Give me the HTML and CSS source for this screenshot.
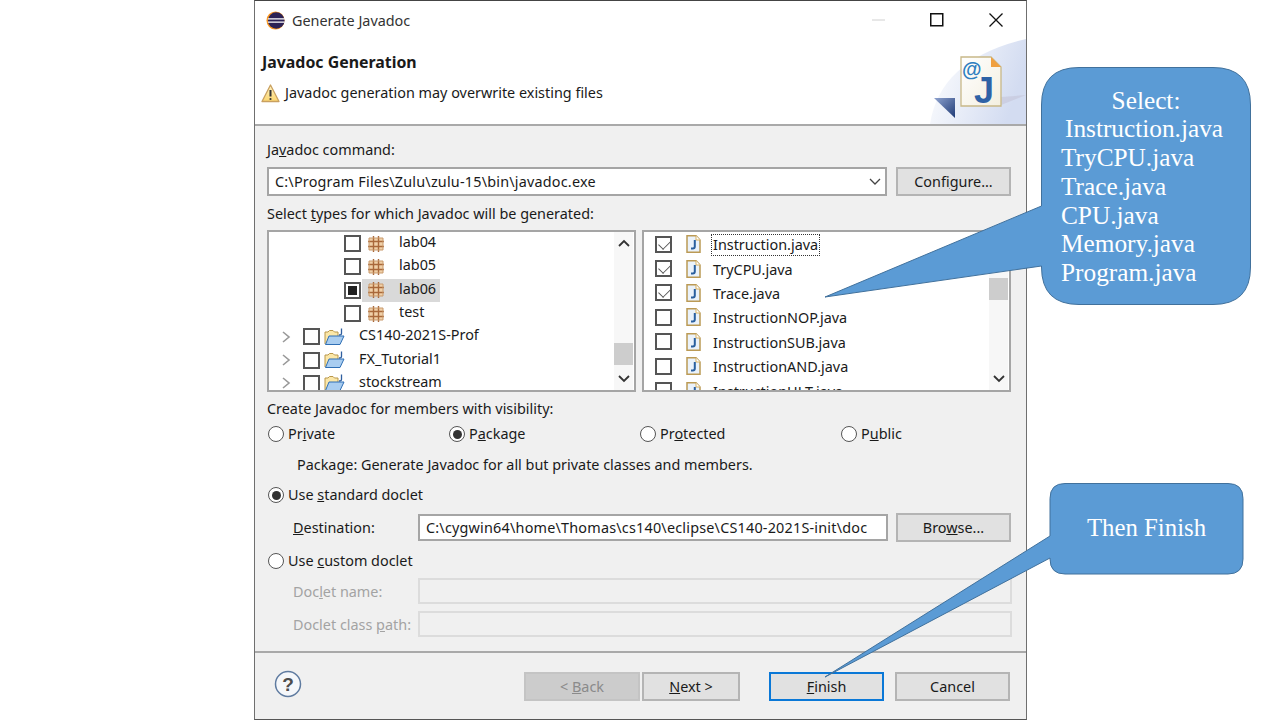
FILE: index.html
```html
<!DOCTYPE html>
<html lang="en">
<head>
  <meta charset="UTF-8">
  <title>Generate Javadoc</title>
  <link rel="stylesheet" href="styles.css">
</head>
<body>

  <svg class="defs" width="0" height="0">
    <symbol id="pkg" viewBox="0 0 16 16">
      <rect x="1" y="2" width="14" height="12" fill="#f0d0a8"/>
      <path d="M0 5.500H16M0 10.500H16M5.500 0V16M10.500 0V16" stroke="#a9683a" stroke-width="1.400" fill="none"/>
      <path d="M1 2H15V14H1Z" stroke="#c99a6c" fill="none"/>
    </symbol>
    <symbol id="project" viewBox="0 0 21 18">
      <path d="M1 16V4H4L5.500 2.500H9L10.500 4H14V8" fill="#fbe7a8" stroke="#b9974a"/>
      <path d="M1.500 16.500L5 8H20L16 16.500Z" fill="#a9cdf0" stroke="#2f6fb5"/>
      <path d="M17.500 0.500V5.500Q17.500 7 15 7" stroke="#2f5f9f" stroke-width="1.300" fill="none"/>
    </symbol>
    <symbol id="java" viewBox="0 0 15 18">
      <path d="M1 0.800H10L14 5V17.200H1Z" fill="#eaf2fb" stroke="#bb9a55" stroke-width="1.500"/>
      <path d="M10 0.800V5H14" fill="#fff" stroke="#d8b060"/>
      <path d="M8.800 5V11.500Q8.800 13.500 6.800 13.500H5" stroke="#2a5f9e" stroke-width="2" fill="none"/>
    </symbol>
  </svg>

  <div class="dialog">
    <div class="titlebar">
      <svg class="app-icon" width="19" height="19" viewBox="0 0 20 20">
        <circle cx="10" cy="10" r="9.500" fill="#f7941e"/>
        <circle cx="10.800" cy="10" r="8.700" fill="#2c2255"/>
        <path d="M2 8.200H19.500M2 11.800H19.500" stroke="#fff" stroke-width="1.300"/>
      </svg>
      <span class="title-text">Generate Javadoc</span>
      <div class="win-btns">
        <svg width="14" height="14" viewBox="0 0 14 14"><path d="M1 7H14" stroke="#d0d0d0"/></svg>
        <svg width="14" height="14" viewBox="0 0 14 14"><rect x="0.750" y="0.750" width="12" height="12" fill="none" stroke="#111" stroke-width="1.500"/></svg>
        <svg width="14" height="14" viewBox="0 0 14 14"><path d="M0.500 0.500L13.500 13.500M13.500 0.500L0.500 13.500" stroke="#111" stroke-width="1.300"/></svg>
      </div>
    </div>

    <div class="banner">
      <h1 class="banner-title">Javadoc Generation</h1>
      <div class="banner-msg">
        <svg width="19" height="19" viewBox="0 0 19 19">
          <defs>
            <linearGradient id="warnfill" x1="0" y1="0" x2="0" y2="1">
              <stop offset="0" stop-color="#fff3c4"/>
              <stop offset="1" stop-color="#fbd670"/>
            </linearGradient>
          </defs>
          <path d="M9.500 1L18 17.500H1Z" fill="url(#warnfill)" stroke="#c9a060" stroke-width="1.300" stroke-linejoin="round"/>
          <path d="M9.500 6V12.500" stroke="#333" stroke-width="2"/>
          <circle cx="9.500" cy="15" r="1.100" fill="#333"/>
        </svg>
        <span>Javadoc generation may overwrite existing files</span>
      </div>
      <svg class="banner-art" width="96" height="85" viewBox="0 0 96 85">
        <defs>
          <linearGradient id="artfade" x1="0" y1="0" x2="1" y2="0.300">
            <stop offset="0" stop-color="#ffffff"/>
            <stop offset="1" stop-color="#d3dcf1"/>
          </linearGradient>
          <linearGradient id="arrowfade" x1="0" y1="0" x2="1" y2="1">
            <stop offset="0" stop-color="#8fa3cf"/>
            <stop offset="1" stop-color="#1f3a75"/>
          </linearGradient>
          <linearGradient id="pagefade" x1="0" y1="0" x2="1" y2="1">
            <stop offset="0" stop-color="#ffffff"/>
            <stop offset="1" stop-color="#f3efe0"/>
          </linearGradient>
        </defs>
        <path d="M0 85Q10 20 96 0V85Z" fill="url(#artfade)"/>
        <path d="M71 58L96 56L71 66Z" fill="#c4c4d8" opacity="0.600"/>
        <path d="M4 59H25V79Z" fill="url(#arrowfade)"/>
        <path d="M31 18H61L71 28V67H31Z" fill="url(#pagefade)" stroke="#c8b888" stroke-width="1.300"/>
        <path d="M61 18L71 28H61Z" fill="#f0a040"/>
        <text x="32" y="37" class="art-at">@</text>
        <text x="44" y="64" class="art-j">J</text>
      </svg>
    </div>

    <div class="content">
      <div class="label row-command"><span>Ja<u>v</u>adoc command:</span></div>
      <div class="field-row row-combo">
        <div class="combo">
          <span class="path-text">C:\Program Files\Zulu\zulu-15\bin\javadoc.exe</span>
          <svg width="12" height="7" viewBox="0 0 12 7"><path d="M1 1L6 6L11 1" stroke="#444" stroke-width="1.300" fill="none"/></svg>
        </div>
        <button class="btn side-btn" type="button">Confi<u>g</u>ure...</button>
      </div>

      <div class="label row-select"><span>Select <u>t</u>ypes for which Javadoc will be generated:</span></div>
      <div class="panels">
        <div class="panel">
          <div class="tree">
            <div class="tree-row pkg-row"><i class="check"></i><svg class="pkg-icon"><use href="#pkg"/></svg><span class="pkg-name">lab04</span></div>
            <div class="tree-row pkg-row"><i class="check"></i><svg class="pkg-icon"><use href="#pkg"/></svg><span class="pkg-name">lab05</span></div>
            <div class="tree-row pkg-row"><i class="check partial"></i><div class="selected"><svg class="pkg-icon"><use href="#pkg"/></svg><span class="pkg-name">lab06</span></div></div>
            <div class="tree-row pkg-row"><i class="check"></i><svg class="pkg-icon"><use href="#pkg"/></svg><span class="pkg-name">test</span></div>
            <div class="tree-row prj-row"><svg class="twist" width="9" height="12" viewBox="0 0 9 12"><path d="M1 1L7 6L1 11" stroke="#999" stroke-width="1.600" fill="none"/></svg><i class="check"></i><svg class="prj-icon"><use href="#project"/></svg><span class="prj-name">CS140-2021S-Prof</span></div>
            <div class="tree-row prj-row"><svg class="twist" width="9" height="12" viewBox="0 0 9 12"><path d="M1 1L7 6L1 11" stroke="#999" stroke-width="1.600" fill="none"/></svg><i class="check"></i><svg class="prj-icon"><use href="#project"/></svg><span class="prj-name">FX_Tutorial1</span></div>
            <div class="tree-row prj-row"><svg class="twist" width="9" height="12" viewBox="0 0 9 12"><path d="M1 1L7 6L1 11" stroke="#999" stroke-width="1.600" fill="none"/></svg><i class="check"></i><svg class="prj-icon"><use href="#project"/></svg><span class="prj-name">stockstream</span></div>
          </div>
          <div class="scrollbar">
            <svg width="12" height="8" viewBox="0 0 12 8"><path d="M1 7L6 2L11 7" stroke="#333" stroke-width="1.800" fill="none"/></svg>
            <div class="track thumb-low"><div class="thumb"></div></div>
            <svg width="12" height="8" viewBox="0 0 12 8"><path d="M1 1L6 6L11 1" stroke="#333" stroke-width="1.800" fill="none"/></svg>
          </div>
        </div>
        <div class="panel">
          <div class="files">
            <div class="file-row"><i class="check checked"></i><svg class="java-icon"><use href="#java"/></svg><span class="file-name focused">Instruction.java</span></div>
            <div class="file-row"><i class="check checked"></i><svg class="java-icon"><use href="#java"/></svg><span class="file-name">TryCPU.java</span></div>
            <div class="file-row"><i class="check checked"></i><svg class="java-icon"><use href="#java"/></svg><span class="file-name">Trace.java</span></div>
            <div class="file-row"><i class="check"></i><svg class="java-icon"><use href="#java"/></svg><span class="file-name">InstructionNOP.java</span></div>
            <div class="file-row"><i class="check"></i><svg class="java-icon"><use href="#java"/></svg><span class="file-name">InstructionSUB.java</span></div>
            <div class="file-row"><i class="check"></i><svg class="java-icon"><use href="#java"/></svg><span class="file-name">InstructionAND.java</span></div>
            <div class="file-row"><i class="check"></i><svg class="java-icon"><use href="#java"/></svg><span class="file-name">InstructionHLT.java</span></div>
          </div>
          <div class="scrollbar">
            <svg width="12" height="8" viewBox="0 0 12 8"><path d="M1 7L6 2L11 7" stroke="#333" stroke-width="1.800" fill="none"/></svg>
            <div class="track thumb-high"><div class="thumb"></div></div>
            <svg width="12" height="8" viewBox="0 0 12 8"><path d="M1 1L6 6L11 1" stroke="#333" stroke-width="1.800" fill="none"/></svg>
          </div>
        </div>
      </div>

      <div class="label row-create"><span>Create Javadoc for members with visibility:</span></div>
      <div class="radios">
        <label class="radio-item"><i class="radio"></i><span>Pr<u>i</u>vate</span></label>
        <label class="radio-item"><i class="radio on"></i><span>P<u>a</u>ckage</span></label>
        <label class="radio-item"><i class="radio"></i><span>Pr<u>o</u>tected</span></label>
        <label class="radio-item"><i class="radio"></i><span>P<u>u</u>blic</span></label>
      </div>
      <div class="label row-desc"><span>Package: Generate Javadoc for all but private classes and members.</span></div>
      <label class="radio-item row-standard"><i class="radio on"></i><span>Use <u>s</u>tandard doclet</span></label>
      <div class="field-row row-dest">
        <span class="field-label"><u>D</u>estination:</span>
        <div class="input path-text">C:\cygwin64\home\Thomas\cs140\eclipse\CS140-2021S-init\doc</div>
        <button class="btn side-btn" type="button">Bro<u>w</u>se...</button>
      </div>
      <label class="radio-item row-custom"><i class="radio"></i><span>Use <u>c</u>ustom doclet</span></label>
      <div class="field-row row-name disabled">
        <span class="field-label">Doc<u>l</u>et name:</span>
        <div class="input"></div>
      </div>
      <div class="field-row row-path disabled">
        <span class="field-label">Doclet class <u>p</u>ath:</span>
        <div class="input"></div>
      </div>
    </div>

    <div class="footer">
      <svg class="help" width="28" height="28" viewBox="0 0 28 28">
        <circle cx="14" cy="14" r="12.500" fill="#f5f7fa" stroke="#5f7ba0" stroke-width="1.500"/>
        <text x="14" y="20.500" class="help-mark">?</text>
      </svg>
      <div class="footer-btns">
        <button class="btn back" type="button">&lt; <u>B</u>ack</button>
        <button class="btn next" type="button"><u>N</u>ext &gt;</button>
        <button class="btn finish" type="button"><u>F</u>inish</button>
        <button class="btn cancel" type="button">Cancel</button>
      </div>
    </div>
  </div>

  <!-- slide callouts sit on top of the screenshot -->
  <svg class="callouts" width="1280" height="720" viewBox="0 0 1280 720">
    <path class="bubble" d="M1079 67.500H1213Q1250.500 67.500 1250.500 105V267Q1250.500 304.500 1213 304.500H1079Q1041.500 304.500 1041.500 267V266L825 297L1041.500 206V105Q1041.500 67.500 1079 67.500Z"/>
    <path class="bubble" d="M1065 483.500H1228Q1243 483.500 1243 498.500V559Q1243 574 1228 574H1065Q1050 574 1050 559V558L825 677L1050 536V498.500Q1050 483.500 1065 483.500Z"/>
  </svg>
  <div class="note note-select">
    <div class="note-head">Select:</div>
    <div class="note-first">Instruction.java</div>
    <div>TryCPU.java</div>
    <div>Trace.java</div>
    <div>CPU.java</div>
    <div>Memory.java</div>
    <div>Program.java</div>
  </div>
  <div class="note note-finish">Then Finish</div>

</body>
</html>
```

FILE: styles.css
```css
* {
  box-sizing: border-box;
}
html, body {
  margin: 0;
  height: 720px;
  overflow: hidden;
}
body {
  position: relative;
  background: #fff;
  font-family: "Noto Sans", Arial, sans-serif;
  font-size: 14.400px;
  color: #1a1a1a;
}
.defs {
  position: absolute;
}
i {
  display: block;
  flex: none;
}

/* dialog */
.dialog {
  width: 773px;
  height: 720px;
  margin-left: 254px;
  display: flex;
  flex-direction: column;
  border: 1px solid #6f6f6f;
  border-top-color: #444;
  border-bottom-color: #555;
  background: #f0f0f0;
}
.titlebar {
  height: 39px;
  flex: none;
  display: flex;
  align-items: center;
  padding: 0 0 1px 11px;
  background: #fff;
}
.title-text {
  margin-left: 7px;
  color: #333;
}
.win-btns {
  margin-left: auto;
  display: flex;
  gap: 45px;
  padding-right: 23px;
}
.banner {
  position: relative;
  height: 86px;
  flex: none;
  padding: 12px 0 0 7px;
  background: #fff;
  border-bottom: 2px solid #a9a9a9;
}
.banner-title {
  margin: 0;
  font-size: 15.900px;
  line-height: 20px;
  font-weight: 700;
}
.banner-msg {
  display: flex;
  align-items: center;
  gap: 5px;
  margin: 11px 0 0 -1px;
  line-height: 20px;
}
.banner-art {
  position: absolute;
  right: 0;
  bottom: 0;
  overflow: hidden;
}
.art-at {
  font: 700 20px "Liberation Sans", Arial, sans-serif;
  fill: #2f7fc0;
}
.art-j {
  font: 700 36px "Liberation Sans", Arial, sans-serif;
  fill: #2e62a6;
}

/* form area */
.content {
  flex: 1;
  padding: 0 14px 0 12px;
}
.label {
  height: 18px;
  line-height: 18px;
}
.field-row {
  display: flex;
  align-items: center;
}
.row-command { margin-top: 15px; }
.row-combo { margin-top: 8px; height: 29px; gap: 9px; }
.row-select { margin-top: 9px; }
.row-create { margin-top: 8px; }
.row-desc { margin-top: 13px; padding-left: 30px; }
.row-standard { margin-top: 12px; }
.row-dest { margin-top: 9px; height: 29px; padding-left: 26px; }
.row-custom { margin-top: 10px; }
.row-name { margin-top: 8px; padding-left: 26px; height: 26px; }
.row-path { margin-top: 7px; padding-left: 26px; height: 26px; }

.path-text {
  letter-spacing: 0.200px;
}
.combo {
  width: 620px;
  height: 29px;
  display: flex;
  align-items: center;
  justify-content: space-between;
  padding: 0 4px 0 6px;
  background: #fff;
  border: 2px solid #a5a5a5;
}
.btn {
  height: 29px;
  padding: 0;
  font: inherit;
  color: inherit;
  background: #e1e1e1;
  border: 2px solid #b4b4b4;
}
.side-btn {
  width: 115px;
}
.field-label {
  width: 125px;
  flex: none;
}
.input {
  width: 470px;
  height: 27px;
  line-height: 23px;
  padding-left: 6px;
  background: #fff;
  border: 2px solid #a5a5a5;
}
.row-dest .btn {
  margin-left: 8px;
}
.disabled .field-label {
  color: #a3a3a3;
}
.disabled .input {
  width: 595px;
  height: 26px;
  background: #f0f0f0;
  border-color: #dcdcdc;
}

/* tree and file list */
.panels {
  margin-top: 7px;
  height: 162px;
  display: flex;
  gap: 6px;
}
.panel {
  width: 369px;
  display: flex;
  justify-content: space-between;
  overflow: hidden;
  background: #fff;
  border: 2px solid #a5a5a5;
}
.tree, .files {
  flex: 1;
  height: 158px;
  overflow: hidden;
}
.check {
  width: 17px;
  height: 17px;
  position: relative;
  background: #fff;
  border: 2px solid #555;
}
.check.partial::after {
  content: "";
  position: absolute;
  inset: 2px;
  background: #222;
}
.check.checked::after {
  content: "";
  position: absolute;
  left: 4px;
  top: 0;
  width: 6px;
  height: 10px;
  border-right: 1.500px solid #555;
  border-bottom: 1.500px solid #555;
  transform: rotate(45deg);
}
.tree-row {
  height: 23.300px;
  display: flex;
  align-items: center;
}
.pkg-row {
  padding-left: 75px;
}
.pkg-icon {
  width: 16px;
  height: 16px;
  flex: none;
}
.pkg-row > .pkg-icon {
  margin-left: 7px;
}
.pkg-name {
  margin: 0 0 4px 15px;
}
.selected {
  width: 78px;
  height: 23px;
  margin-left: 1px;
  padding-left: 6px;
  display: flex;
  align-items: center;
  background: #d9d9d9;
}
.prj-row {
  padding-left: 13px;
}
.twist {
  flex: none;
  margin-right: 12px;
}
.prj-icon {
  width: 21px;
  height: 18px;
  flex: none;
  margin-left: 4px;
}
.prj-name {
  margin: 0 0 4px 14px;
}
.file-row {
  height: 24.400px;
  display: flex;
  align-items: center;
  padding-left: 11px;
}
.java-icon {
  width: 15px;
  height: 18px;
  flex: none;
  margin-left: 14px;
}
.file-name {
  margin: 2px 0 0 10px;
  padding: 0 1px;
  line-height: 20px;
  border: 1px dotted transparent;
}
.focused {
  border-color: #333;
}
.scrollbar {
  width: 19px;
  margin: 0 1px 0 0;
  flex: none;
  display: flex;
  flex-direction: column;
  align-items: center;
  padding: 7px 0;
  background: #f7f7f7;
}
.track {
  flex: 1;
  width: 100%;
  position: relative;
}
.thumb {
  position: absolute;
  left: 0;
  width: 100%;
  height: 22px;
  background: #cdcdcd;
}
.thumb-low .thumb { top: 96px; }
.thumb-high .thumb { top: 31px; }

/* radios */
.radios {
  margin-top: 7px;
  display: grid;
  grid-template-columns: 181px 191px 201px 1fr;
}
.radio-item {
  height: 18px;
  display: flex;
  align-items: center;
  gap: 4px;
  padding-left: 1px;
}
.radio-item span {
  margin-bottom: 2px;
}
.radio {
  width: 16px;
  height: 16px;
  position: relative;
  border-radius: 50%;
  background: #fff;
  border: 1.500px solid #555;
}
.radio.on::after {
  content: "";
  position: absolute;
  inset: 2.500px;
  border-radius: 50%;
  background: #333;
}

/* footer */
.footer {
  height: 68px;
  flex: none;
  position: relative;
  display: flex;
  padding: 19px 0 0 19px;
  border-top: 2px solid #a9a9a9;
}
.help {
  margin-top: -2px;
}
.help-mark {
  font: 700 19px "Liberation Sans", Arial, sans-serif;
  fill: #4d4d4d;
  text-anchor: middle;
}
.footer-btns {
  margin-left: auto;
  padding-right: 16px;
  display: flex;
}
.footer-btns .btn {
  width: 115px;
}
.footer-btns .back {
  width: 116px;
  background: #cccccc;
  border-color: #c4c4c4;
  color: #8a8a8a;
}
.footer-btns .next {
  width: 98px;
  margin-left: 2px;
}
.footer-btns .finish {
  margin-left: 29px;
  border-color: #0a78d7;
}
.footer-btns .cancel {
  margin-left: 11px;
}

/* callouts */
.callouts {
  position: absolute;
  left: 0;
  top: 0;
}
.bubble {
  fill: #5b9bd5;
  stroke: #41719c;
  stroke-width: 1;
}
.note {
  position: absolute;
  font-family: "Liberation Serif", "Times New Roman", serif;
  font-size: 25.300px;
  line-height: 28.800px;
  color: #fff;
}
.note-select {
  left: 1061px;
  top: 85.500px;
  width: 170px;
}
.note-head {
  text-align: center;
  padding-left: 0;
}
.note-first {
  padding-left: 4px;
}
.note-finish {
  left: 1050px;
  top: 514px;
  width: 193px;
  font-size: 24.800px;
  text-align: center;
}
```
